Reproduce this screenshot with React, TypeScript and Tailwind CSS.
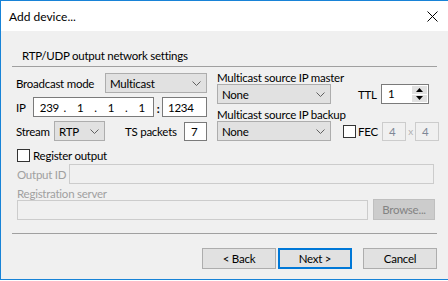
const FONT = "font-['Lato',sans-serif] text-[11.5px] tracking-[-0.25px] leading-[15px] whitespace-nowrap"

function Chevron() {
  return (
    <svg width="9" height="5" viewBox="0 0 9 5" className="shrink-0">
      <path d="M0.5 0.5 L4.5 4.5 L8.5 0.5" fill="none" stroke="#606060" strokeWidth="1" />
    </svg>
  )
}

function Select({ value, w }: { value: string; w: string }) {
  return (
    <div
      className={`${w} shrink-0 h-[20px] flex items-center justify-between border border-[#adadad] bg-[#e1e1e1] pl-[4px] pr-[5px]`}
    >
      <span>{value}</span>
      <Chevron />
    </div>
  )
}

function Check() {
  return <div className="w-[13px] h-[13px] shrink-0 border border-[#333333] bg-white" />
}

function DisabledBox({ value, w }: { value: string; w: string }) {
  return (
    <div className={`${w} shrink-0 h-[19px] flex items-center border border-[#cccccc] bg-[#f0f0f0] pl-[6px] text-[#7d8796]`}>
      {value}
    </div>
  )
}

export default function App() {
  return (
    <div className={`w-[448px] h-[281px] bg-white overflow-hidden text-black ${FONT}`}>
      <div className="w-[460px] h-[280px] border-l border-t border-b border-[#1883d7] bg-[#f0f0f0] flex flex-col">
        {/* Title bar */}
        <div className="h-[30px] shrink-0 bg-white flex items-center justify-between pl-[8px] pr-[22px]">
          <span className="text-[12px] tracking-normal">Add device...</span>
          <svg width="11" height="11" viewBox="0 0 11 11">
            <path d="M0.5 0.5 L10.5 10.5 M10.5 0.5 L0.5 10.5" stroke="#000" strokeWidth="1" />
          </svg>
        </div>

        <div className="ml-[11px] w-[425px] flex flex-col">
          {/* Group header */}
          <div className="mt-[17px] pl-[10px] h-[16px] leading-[16px]">RTP/UDP output network settings</div>
          <div className="mt-[2px] border-t border-[#a0a0a0]" />

          <div className="ml-[4px] flex items-start gap-[10px]">
            {/* Left column */}
            <div className="w-[191px] shrink-0 mt-[6px] flex flex-col gap-[4px]">
              <div className="flex items-center h-[20px]">
                <span className="w-[89px] shrink-0">Broadcast mode</span>
                <Select value="Multicast" w="w-[102px]" />
              </div>
              <div className="flex items-center h-[20px]">
                <span className="w-[17px] shrink-0">IP</span>
                <div className="w-[121px] shrink-0 h-[20px] flex items-center border border-[#7a7a7a] bg-white pl-[4px]">
                  <span className="w-[23px] text-center">239</span>
                  <span className="w-[8px] text-center">.</span>
                  <span className="w-[23px] text-center">1</span>
                  <span className="w-[8px] text-center">.</span>
                  <span className="w-[23px] text-center">1</span>
                  <span className="w-[8px] text-center">.</span>
                  <span className="w-[23px] text-center">1</span>
                </div>
                <span className="w-[8px] shrink-0 text-center font-bold pt-[3px]">:</span>
                <div className="w-[45px] shrink-0 h-[20px] flex items-center border border-[#7a7a7a] bg-white pl-[5px]">1234</div>
              </div>
              <div className="flex items-center h-[20px]">
                <span className="w-[38px] shrink-0">Stream</span>
                <Select value="RTP" w="w-[51px]" />
                <span className="ml-[20px] w-[59px] shrink-0">TS packets</span>
                <div className="w-[23px] shrink-0 h-[19px] flex items-center border border-[#7a7a7a] bg-white pl-[6px]">7</div>
              </div>
            </div>

            {/* Right column */}
            <div className="flex-1 mt-[4px] flex flex-col">
              <div className="h-[13px] leading-[14px]">Multicast source IP master</div>
              <div className="flex items-center h-[20px]">
                <Select value="None" w="w-[114px]" />
                <span className="ml-[27px] w-[23px] shrink-0">TTL</span>
                <div className="w-[48px] shrink-0 h-[20px] flex border border-[#7a7a7a] bg-white">
                  <span className="flex-1 pl-[6px] leading-[18px]">1</span>
                  <div className="w-[16px] flex flex-col gap-[1px] p-[1px] pl-0">
                    <div className="flex-1 bg-[#e1e1e1] flex items-center justify-center">
                      <svg width="7" height="4" viewBox="0 0 7 4"><path d="M0 4 L3.5 0 L7 4 Z" fill="#000" /></svg>
                    </div>
                    <div className="flex-1 bg-[#e1e1e1] flex items-center justify-center">
                      <svg width="7" height="4" viewBox="0 0 7 4"><path d="M0 0 L3.5 4 L7 0 Z" fill="#000" /></svg>
                    </div>
                  </div>
                </div>
              </div>
              <div className="h-[17px] pt-[3px] leading-[15px]">Multicast source IP backup</div>
              <div className="flex items-center h-[20px]">
                <Select value="None" w="w-[114px]" />
                <div className="ml-[12px]">
                  <Check />
                </div>
                <span className="w-[26px] shrink-0 pl-[2px]">FEC</span>
                <DisabledBox value="4" w="w-[24px]" />
                <span className="w-[9px] shrink-0 text-center text-[#b0b0b0] text-[10px]">x</span>
                <DisabledBox value="4" w="w-[24px]" />
              </div>
            </div>
          </div>

          {/* Registration */}
          <div className="ml-[5px] mt-[8px] flex items-center gap-[3px] h-[13px]">
            <Check />
            <span>Register output</span>
          </div>
          <div className="ml-[5px] mt-[2px] flex items-center h-[20px]">
            <span className="w-[52px] shrink-0 text-[#a0a0a0]">Output ID</span>
            <div className="w-[365px] shrink-0 h-[20px] border border-[#cccccc] bg-[#f0f0f0]" />
          </div>
          <div className="ml-[5px] h-[15px] leading-[19px] text-[#a0a0a0]">Registration server</div>
          <div className="ml-[5px] flex items-end gap-[5px] h-[21px]">
            <div className="w-[351px] shrink-0 h-[20px] border border-[#cccccc] bg-[#f0f0f0]" />
            <div className="w-[62px] shrink-0 h-[21px] flex items-center justify-center border border-[#bfbfbf] bg-[#cccccc] text-[#838383]">
              Browse...
            </div>
          </div>

          <div className="mt-[13px] border-t border-[#a0a0a0]" />

          {/* Buttons */}
          <div className="mt-[14px] flex justify-end items-center">
            <div className="w-[74px] h-[21px] flex items-center justify-center border border-[#adadad] bg-[#e1e1e1]">&lt; Back</div>
            <div className="ml-[2px] w-[74px] h-[21px] flex items-center justify-center border-2 border-[#0078d7] bg-[#e1e1e1]">Next &gt;</div>
            <div className="ml-[11px] w-[74px] h-[21px] flex items-center justify-center border border-[#adadad] bg-[#e1e1e1]">Cancel</div>
          </div>
        </div>
      </div>
    </div>
  )
}
